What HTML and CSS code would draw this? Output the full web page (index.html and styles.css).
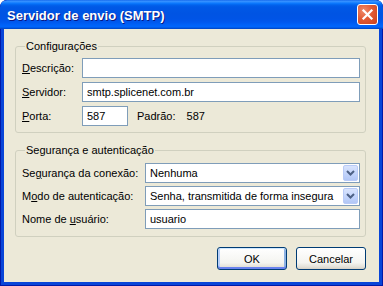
FILE: index.html
```html
<!DOCTYPE html>
<html lang="pt-BR">
<head>
    <meta charset="UTF-8">
    <meta name="viewport" content="width=device-width, initial-scale=1.0">
    <title>Servidor de envio (SMTP)</title>
    <link rel="stylesheet" href="styles.css">
</head>
<body>
    <div class="window">
        <div class="titlebar">
            <span class="title">Servidor de envio (SMTP)</span>
            <button class="close" aria-label="Fechar">
                <svg width="19" height="19" viewBox="0 0 19 19">
                    <path d="M5.5 5.5 L13.5 13.5 M13.5 5.5 L5.5 13.5" stroke="#fff" stroke-width="2.2" stroke-linecap="square"/>
                </svg>
            </button>
        </div>

        <div class="client">
            <fieldset class="group">
                <legend>Configurações</legend>
                <div class="form config">
                    <label><u>D</u>escrição:</label>
                    <input class="field" type="text" value="">

                    <label><u>S</u>ervidor:</label>
                    <input class="field" type="text" value="smtp.splicenet.com.br">

                    <label><u>P</u>orta:</label>
                    <div class="port-row">
                        <input class="field port" type="text" value="587">
                        <span class="default-label">Padrão:</span>
                        <span class="default-value">587</span>
                    </div>
                </div>
            </fieldset>

            <fieldset class="group">
                <legend>Segurança e autenticação</legend>
                <div class="form security">
                    <label>Se<u>g</u>urança da conexão:</label>
                    <div class="combo">
                        <span class="combo-text">Nenhuma</span>
                        <span class="combo-arrow">
                            <svg width="9" height="6" viewBox="0 0 9 6"><path d="M1 1 L4.5 4.5 L8 1" stroke="#4d6185" stroke-width="2" fill="none"/></svg>
                        </span>
                    </div>

                    <label>M<u>o</u>do de autenticação:</label>
                    <div class="combo">
                        <span class="combo-text">Senha, transmitida de forma insegura</span>
                        <span class="combo-arrow">
                            <svg width="9" height="6" viewBox="0 0 9 6"><path d="M1 1 L4.5 4.5 L8 1" stroke="#4d6185" stroke-width="2" fill="none"/></svg>
                        </span>
                    </div>

                    <label>Nome de <u>u</u>suário:</label>
                    <input class="field" type="text" value="usuario">
                </div>
            </fieldset>

            <div class="buttons">
                <button class="btn default">OK</button>
                <button class="btn">Cancelar</button>
            </div>
        </div>
    </div>
</body>
</html>
```

FILE: styles.css
```css
body {
    margin: 0;
    background: #fff;
    font-family: 'Liberation Sans', Arial, sans-serif;
    font-size: 11px;
    color: #000;
}
.window {
    width: 383px;
    height: 286px;
    box-sizing: border-box;
    display: flex;
    flex-direction: column;
    background: #0845d8;
    border-radius: 7px 7px 0 0;
    box-shadow: inset 0 0 0 1px #0019a8;
    overflow: hidden;
}
.titlebar {
    height: 29px;
    flex: none;
    display: flex;
    align-items: center;
    justify-content: space-between;
    padding: 0 5px 0 7px;
    background: linear-gradient(to bottom,
        #0a5ee8 0px, #3b93ff 1px, #2a8bff 2px, #127cfe 3px, #0470f8 4px,
        #0362ec 5px, #0058e6 7px, #0054e3 14px, #0054e6 19px,
        #0058ee 22px, #0062f8 25px, #0066fc 27px, #0052d8 28px, #0043c4 29px);
    border-radius: 7px 7px 0 0;
}
.title {
    color: #fff;
    font-weight: bold;
    font-size: 13px;
    text-shadow: 1px 1px 0 #0a1882;
    padding-top: 1px;
}
.close {
    width: 21px;
    height: 21px;
    padding: 0;
    border: 1px solid #fff;
    border-radius: 3px;
    background: radial-gradient(circle at 30% 30%, #ef8a6a 0%, #e25b35 45%, #c9401b 100%);
    display: flex;
    align-items: center;
    justify-content: center;
}
.client {
    flex: 1;
    margin: 0 4px 4px;
    background: #ece9d8;
    padding: 11px 13px 0 11px;
}
.group {
    margin: 0 0 11px;
    padding: 5px 5px 6px 6px;
    border: 1px solid #d0d0bf;
    border-radius: 3px;
    min-width: 0;
}
.group legend {
    padding: 0 1px;
    margin-left: 3px;
    line-height: 13px;
    color: #000;
}
.form {
    display: grid;
    row-gap: 4px;
    align-items: center;
}
.config {
    grid-template-columns: 60px 1fr;
}
.security {
    grid-template-columns: 123px 1fr;
    row-gap: 3px;
    padding-top: 1px;
    padding-bottom: 1px;
}
.field {
    height: 20px;
    box-sizing: border-box;
    border: 1px solid #7f9db9;
    padding: 0 4px;
    margin: 0;
    font: inherit;
    background: #fff;
    outline: none;
    width: 100%;
}
.port-row {
    display: flex;
    align-items: center;
}
.port {
    width: 46px;
}
.default-label {
    margin-left: 9px;
}
.default-value {
    margin-left: 11px;
}
.combo {
    height: 20px;
    box-sizing: border-box;
    border: 1px solid #7f9db9;
    background: #fff;
    display: flex;
    align-items: center;
    justify-content: space-between;
    padding-left: 4px;
}
.combo-arrow {
    width: 15px;
    height: 16px;
    margin-right: 1px;
    box-sizing: border-box;
    border: 1px solid #b9cbf7;
    border-radius: 2px;
    background: linear-gradient(to bottom, #d9e4fd, #c1d3fb 60%, #b2c7f6);
    display: flex;
    align-items: center;
    justify-content: center;
}
.buttons {
    display: flex;
    justify-content: flex-end;
    gap: 9px;
    margin-top: -1px;
}
.btn {
    width: 70px;
    height: 23px;
    padding: 0;
    font: inherit;
    color: #000;
    border: 1px solid #003c74;
    border-radius: 3px;
    background: linear-gradient(to bottom, #ffffff, #f4f4f0 70%, #e3e1d8 90%, #d6d0c5);
}
.btn.default {
    box-shadow: inset 0 1px 0 #cee7ff, inset 0 -2px 0 #6982ee, inset 2px 0 0 #b9d1fa, inset -2px 0 0 #8db2e3;
}
```
